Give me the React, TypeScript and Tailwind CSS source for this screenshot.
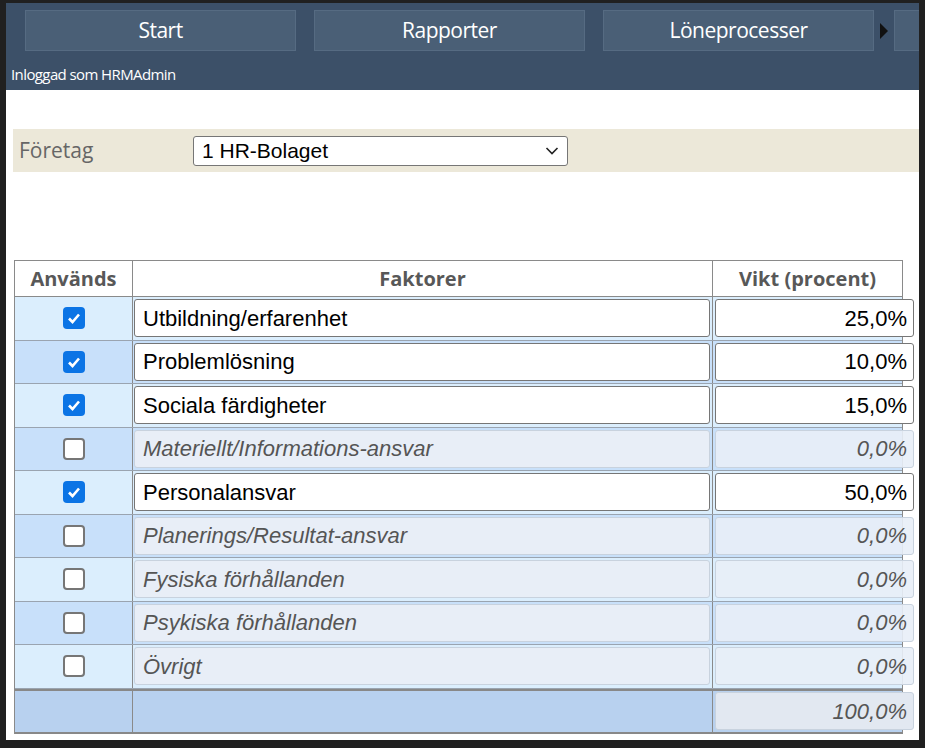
import React from "react";

const rows: [string, string, boolean][] = [
  ["Utbildning/erfarenhet", "25,0%", true],
  ["Problemlösning", "10,0%", true],
  ["Sociala färdigheter", "15,0%", true],
  ["Materiellt/Informations-ansvar", "0,0%", false],
  ["Personalansvar", "50,0%", true],
  ["Planerings/Resultat-ansvar", "0,0%", false],
  ["Fysiska förhållanden", "0,0%", false],
  ["Psykiska förhållanden", "0,0%", false],
  ["Övrigt", "0,0%", false],
];

function Check({ on }: { on: boolean }) {
  return on ? (
    <div className="w-[22px] h-[22px] rounded-[4px] bg-[#0b74e5] flex items-center justify-center">
      <svg width="14" height="12" viewBox="0 0 14 12"><path d="M2 6.5 L5.5 10 L12 2.5" fill="none" stroke="white" strokeWidth="2.6" /></svg>
    </div>
  ) : (
    <div className="w-[22px] h-[22px] rounded-[4px] bg-white border-2 border-[#767676]" />
  );
}

export default function App() {
  return (
    <div className="w-[925px] h-[748px] bg-[#202020] pl-[6px] pr-[6px] pt-[3px] pb-[8px] overflow-hidden" style={{ fontFamily: "'Liberation Sans', Arial, sans-serif" }}>
      <div className="h-full bg-white overflow-hidden">
        <div className="h-[87px] bg-[#3c5068] pt-[7px]">
          <div className="flex items-center h-[41px] pl-[19px] gap-[18px] text-white text-[21px]" style={{ fontFamily: "'Open Sans', sans-serif" }}>
            <div className="w-[271px] shrink-0 h-full bg-[#4a5f76] border border-[#566b82] flex items-center justify-center tracking-[-0.5px]">Start</div>
            <div className="w-[271px] shrink-0 h-full bg-[#4a5f76] border border-[#566b82] flex items-center justify-center tracking-[-0.5px]">Rapporter</div>
            <div className="w-[271px] shrink-0 h-full bg-[#4a5f76] border border-[#566b82] flex items-center justify-center tracking-[-0.5px]">Löneprocesser</div>
            <div className="flex items-center h-full -ml-[18px] shrink-0">
              <svg width="20" height="20" viewBox="0 0 20 20"><path d="M6 2 L14 10 L6 18 Z" fill="#111" /></svg>
              <div className="w-[40px] h-full bg-[#4a5f76] border border-[#566b82]" />
            </div>
          </div>
          <div className="pl-[5px] mt-[12px] text-white text-[15px] tracking-[-0.6px]" style={{ fontFamily: "'Open Sans', sans-serif" }}>Inloggad som HRMAdmin</div>
        </div>
        <div className="mt-[39px] ml-[7px] h-[43px] bg-[#ece8d9] flex items-center">
          <span className="ml-[6px] w-[174px] shrink-0 text-[21px] text-[#666]" style={{ fontFamily: "'Open Sans', sans-serif" }}>Företag</span>
          <div className="w-[375px] shrink-0 h-[30px] bg-white border border-[#767676] rounded-[3px] flex items-center justify-between px-[8px] text-[21px] text-black">
            <span>1 HR-Bolaget</span>
            <svg width="14" height="10" viewBox="0 0 14 10"><path d="M1.5 2 L7 7.5 L12.5 2" fill="none" stroke="#222" strokeWidth="1.6" /></svg>
          </div>
        </div>
        <div className="mt-[88px] ml-[8px] w-[889px] border border-[#8a8a8a]">
          <div className="flex h-[36px] text-[20px] font-bold text-[#585858] border-b border-[#8a8a8a]" style={{ fontFamily: "'Open Sans', sans-serif" }}>
            <div className="w-[118px] shrink-0 border-r border-[#8a8a8a] flex items-center justify-center">Används</div>
            <div className="w-[580px] shrink-0 border-r border-[#8a8a8a] flex items-center justify-center">Faktorer</div>
            <div className="flex-1 flex items-center justify-center">Vikt (procent)</div>
          </div>
          {rows.map(([name, pct, on], i) => (
            <div key={name} className={`flex h-[43.5px] border-b border-[#9aa4b0] ${i % 2 === 0 ? "bg-[#dbeefd]" : "bg-[#c8e0fa]"}`}>
              <div className="w-[118px] shrink-0 border-r border-[#8a8a8a] flex items-center justify-center"><Check on={on} /></div>
              <div className="w-[580px] shrink-0 border-r border-[#8a8a8a] flex items-center px-[1px]">
                <div className={`w-[576px] shrink-0 h-[38px] rounded-[3px] border flex items-center px-[8px] text-[22px] ${on ? "bg-white border-[#767676] text-black" : "bg-[#e8eef7] border-[#c8d2de] text-[#555] italic"}`}>{name}</div>
              </div>
              <div className="flex-1 min-w-0 flex items-center pl-[2px] overflow-visible">
                <div className={`w-[199px] shrink-0 h-[38px] rounded-[3px] border flex items-center justify-end px-[6px] text-[22px] ${on ? "bg-white border-[#767676] text-black" : "bg-[#e8eef7]/90 border-[#c8d2de] text-[#555] italic"}`}>{pct}</div>
              </div>
            </div>
          ))}
          <div className="flex h-[45px] bg-[#b8d1ef] border-t-2 border-[#888] border-b-2 -mb-[1px]">
            <div className="w-[118px] shrink-0 border-r border-[#8a8a8a]" />
            <div className="w-[580px] shrink-0 border-r border-[#8a8a8a]" />
            <div className="flex-1 min-w-0 flex items-center pl-[2px]">
              <div className="w-[199px] shrink-0 h-[38px] rounded-[3px] border border-[#c8d2de] bg-[#e2e8f1] flex items-center justify-end px-[6px] text-[22px] italic text-[#555]">100,0%</div>
            </div>
          </div>
        </div>
      </div>
    </div>
  );
}
